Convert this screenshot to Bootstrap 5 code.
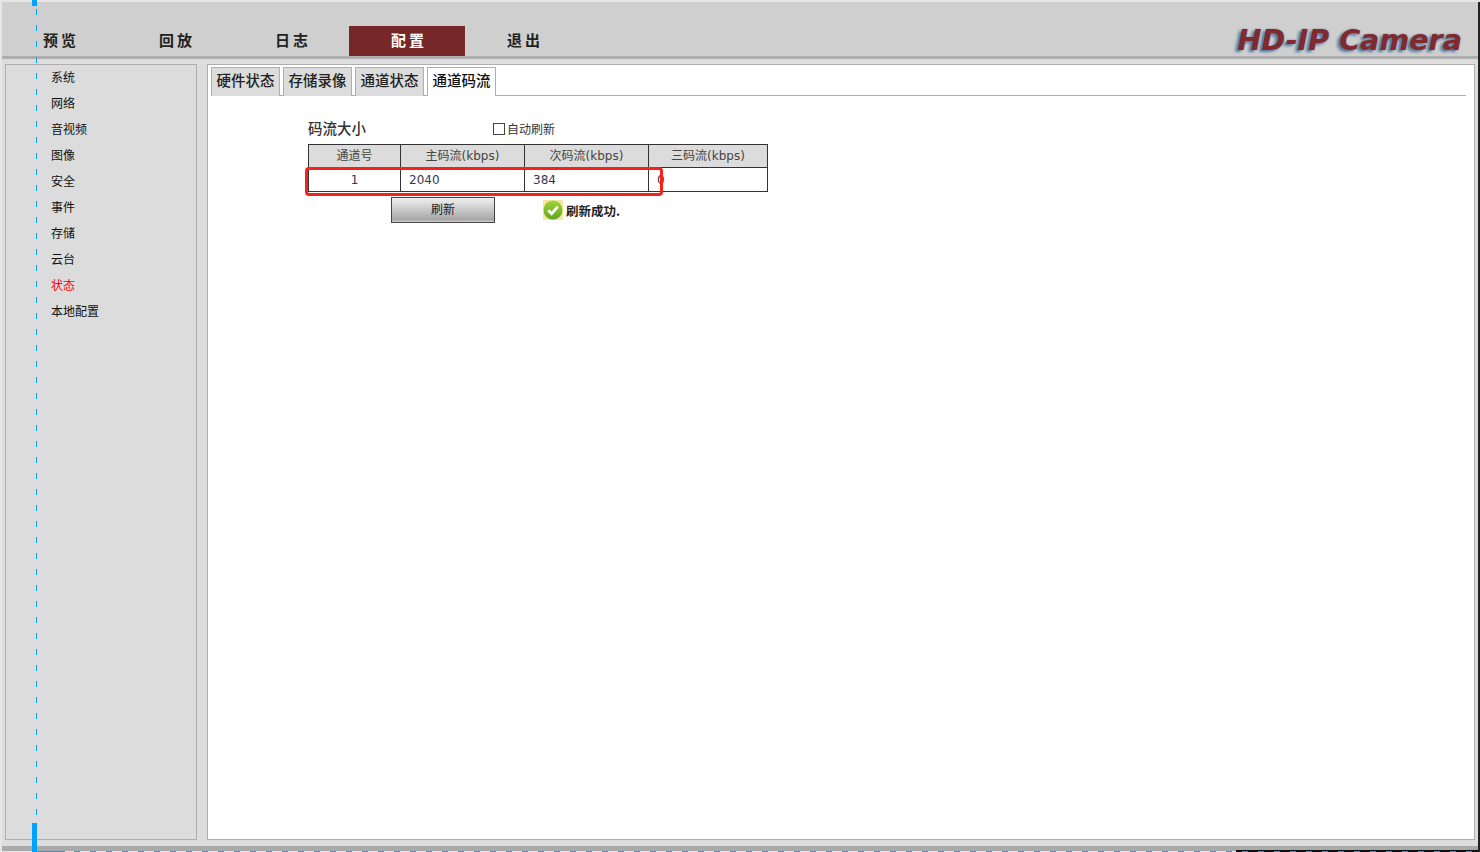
<!doctype html>
<html lang="zh">
<head>
<meta charset="utf-8">
<title>HD-IP Camera</title>
<link href="https://cdn.jsdelivr.net/npm/bootstrap@5.3.0/dist/css/bootstrap.min.css" rel="stylesheet">
<style>
html,body{height:100%;}
body{background:#fff;overflow:hidden;font-family:"Noto Sans CJK SC","Liberation Sans",sans-serif;color:#222;}
.shell{width:1480px;height:852px;position:relative;background:#e6e6e6;overflow:hidden;}
.frame{width:1476px;height:849px;margin-top:2px;margin-left:2px;background:#ddd;}
.topbar{height:57px;flex:none;background:#cfcfcf;border-bottom:3px solid #aeaeae;}
.topnav{padding-top:24px;height:54px;margin-left:-1px;}
.topitem{width:116px;height:30px;line-height:28px;font-size:15px;font-weight:700;color:#222;text-align:center;letter-spacing:3px;padding-left:4px;}
.topitem.is-on{background:#762828;color:#fff;}
.logo-txt{font-family:"DejaVu Sans",sans-serif;font-weight:700;font-style:italic;font-size:28.6px;color:#81292f;letter-spacing:0;line-height:1;text-shadow:-3px 2px 3px #54789c,0 0 2px #7d8fa3;margin:24px 16px 0 0;white-space:nowrap;}
.mainrow{height:787px;flex:none;padding:5px 3px 0 3px;gap:10px;}
.sidepane{width:192px;height:776px;background:#dcdcdc;border:1px solid #aeaeae;padding:0 0 0 45px;}
.sideitem{height:26px;line-height:24px;font-size:12px;color:#111;}
.sideitem.is-on{color:#f00;}
.contentpane{width:1268px;height:776px;background:#fff;border:1px solid #aeaeae;padding:2px 8px 0 3px;}
.tabline{height:29px;border-bottom:1px solid #aeaeae;gap:3px;}
.tabitem{height:29px;width:69px;background:#dcdcdc;border:1px solid #aeaeae;border-bottom:0;font-size:14.5px;font-weight:500;line-height:24px;color:#222;white-space:nowrap;text-align:center;}
.tabitem.is-on{background:#fff;color:#111;position:relative;z-index:1;}
.bodyzone{padding:19px 0 0 97px;}
.headline{width:459px;height:29px;padding-bottom:3px;}
.ttl{font-size:14.5px;font-weight:500;width:185px;line-height:20px;color:#333;}
.chk{width:12px;height:12px;border:1px solid #444;background:#fff;margin-right:2px;margin-top:1px;}
.chklabel{font-size:12px;color:#333;line-height:20px;padding-top:2px;}
.ratetbl{width:460px;border-collapse:collapse;table-layout:fixed;font-size:12px;color:#333;}
.ratetbl col:nth-child(1){width:92px;}
.ratetbl col:nth-child(2),.ratetbl col:nth-child(3){width:124px;}
.ratetbl col:nth-child(4){width:119px;}
.ratetbl th,.ratetbl td{border:1px solid #333;padding:0;text-align:center;font-weight:400;}
.ratetbl th{height:23px;background:#dcdcdc;color:#444;line-height:18px;padding-bottom:2px;}
.ratetbl td{height:24px;font-family:"DejaVu Sans",sans-serif;color:#33384d;line-height:20px;}
.ratetbl td.lf{text-align:left;padding-left:8px;}
.ratetbl th span{font-family:"DejaVu Sans",sans-serif;}
.actionline{margin-top:5px;height:26px;}
.refresh{width:104px;height:26px;margin-left:83px;border:1px solid #444;background:linear-gradient(#f0f0f0,#a6a6a6 92%,#d5d5d5);font-size:12px;line-height:18px;color:#222;padding:0 0 2px;border-radius:0;}
.refresh:hover{background:linear-gradient(#f0f0f0,#a6a6a6 92%,#d5d5d5);border-color:#444;color:#222;}
.okzone{margin-left:48px;}
.okicon{width:20px;height:20px;background:#f6e79c;}
.oktxt{font-size:12.5px;font-weight:700;color:#222;margin-left:3px;line-height:20px;padding-top:1px;}
.footband{height:5px;flex:none;background:#aaa;}
.redmark{position:absolute;left:305px;top:167px;width:358px;height:29px;border:3px solid #f5221b;border-radius:4px;z-index:3;}
.guide{position:absolute;left:36px;top:9px;width:1px;height:808px;background:repeating-linear-gradient(180deg,#00a2ff 0 6px,transparent 6px 16px);z-index:3;}
.handle-a{position:absolute;left:32px;top:0;width:5px;height:6px;background:#00a2ff;z-index:4;}
.handle-b{position:absolute;left:32px;top:823px;width:5px;height:29px;background:#00a2ff;z-index:4;}
.foot-solid{position:absolute;left:37px;top:851px;width:28px;height:1px;background:#00a2ff;z-index:5;}
.foot-dash{position:absolute;left:74px;right:0;top:851px;height:1px;background:repeating-linear-gradient(90deg,#1e9fe0 0 6px,transparent 6px 16px);z-index:5;}
.foot-black{position:absolute;left:1236px;right:0;top:850px;height:2px;background:#111;z-index:2;}
.edge-right{position:absolute;left:1478px;top:2px;bottom:0;width:2px;background:#222;z-index:2;}
</style>
</head>
<body>
<div class="shell">
  <div class="frame d-flex flex-column">
    <div class="topbar d-flex justify-content-between">
      <div class="topnav d-flex">
        <div class="topitem">预览</div>
        <div class="topitem">回放</div>
        <div class="topitem">日志</div>
        <div class="topitem is-on">配置</div>
        <div class="topitem">退出</div>
      </div>
      <div class="logo-txt">HD-IP Camera</div>
    </div>
    <div class="mainrow d-flex">
      <div class="sidepane">
        <div class="sideitem">系统</div>
        <div class="sideitem">网络</div>
        <div class="sideitem">音视频</div>
        <div class="sideitem">图像</div>
        <div class="sideitem">安全</div>
        <div class="sideitem">事件</div>
        <div class="sideitem">存储</div>
        <div class="sideitem">云台</div>
        <div class="sideitem is-on">状态</div>
        <div class="sideitem">本地配置</div>
      </div>
      <div class="contentpane">
        <div class="tabline d-flex">
          <div class="tabitem">硬件状态</div>
          <div class="tabitem">存储录像</div>
          <div class="tabitem">通道状态</div>
          <div class="tabitem is-on">通道码流</div>
        </div>
        <div class="bodyzone">
          <div class="headline d-flex align-items-center">
            <div class="ttl">码流大小</div>
            <span class="chk d-inline-block"></span><span class="chklabel">自动刷新</span>
          </div>
          <table class="ratetbl">
            <colgroup><col><col><col><col></colgroup>
            <tr><th>通道号</th><th>主码流<span>(kbps)</span></th><th>次码流<span>(kbps)</span></th><th>三码流<span>(kbps)</span></th></tr>
            <tr><td>1</td><td class="lf">2040</td><td class="lf">384</td><td class="lf">0</td></tr>
          </table>
          <div class="actionline d-flex align-items-center">
            <button type="button" class="btn refresh">刷新</button>
            <div class="okzone d-flex align-items-center">
              <span class="okicon d-block">
                <svg class="d-block" width="20" height="20" viewBox="0 0 20 20"><defs><linearGradient id="okg" x1="0" y1="0" x2="0" y2="1"><stop offset="0" stop-color="#9fd53c"/><stop offset="1" stop-color="#5fa521"/></linearGradient></defs><circle cx="10" cy="10" r="9.5" fill="url(#okg)"/><path d="M5.2 10.2l3.4 3.4 6.2-7" fill="none" stroke="#fff" stroke-width="2.8"/></svg>
              </span>
              <span class="oktxt">刷新成功.</span>
            </div>
          </div>
        </div>
      </div>
    </div>
    <div class="footband"></div>
  </div>
  <div class="redmark"></div>
  <div class="guide"></div>
  <div class="handle-a"></div>
  <div class="handle-b"></div>
  <div class="foot-black"></div>
  <div class="foot-solid"></div>
  <div class="foot-dash"></div>
  <div class="edge-right"></div>
</div>
<script src="https://cdn.jsdelivr.net/npm/bootstrap@5.3.0/dist/js/bootstrap.bundle.min.js"></script>
</body>
</html>
